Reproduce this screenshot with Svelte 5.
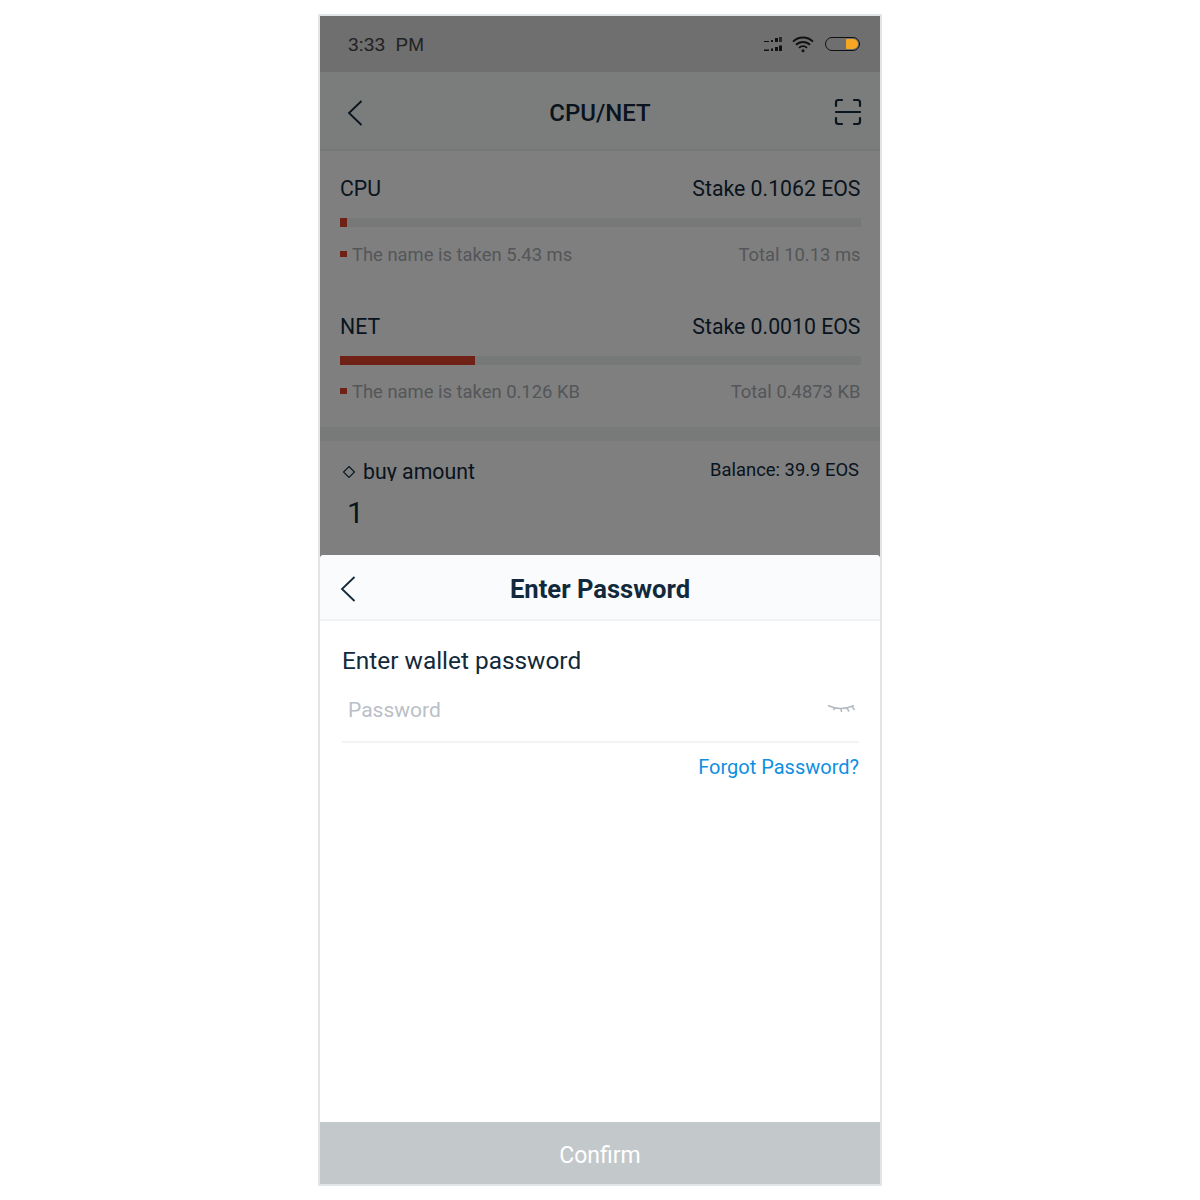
<script>
  const usage = [
    { name: 'CPU', stake: 'Stake 0.1062 EOS', used: 'The name is taken 5.43 ms', total: 'Total 10.13 ms', pct: 1.4 },
    { name: 'NET', stake: 'Stake 0.0010 EOS', used: 'The name is taken 0.126 KB', total: 'Total 0.4873 KB', pct: 26 }
  ];
</script>

<div class="page">
  <div class="phone">
    <div class="status">
      <span class="time">3:33&nbsp; PM</span>
      <div class="status-icons">
        <svg width="20" height="16" viewBox="0 0 20 16" fill="#222">
          <rect x="1" y="5" width="5" height="1" /><rect x="8" y="4" width="2" height="2" /><rect x="12" y="2" width="3" height="4" /><rect x="16" y="1" width="3" height="5" fill="#555" />
          <rect x="1" y="13.500" width="5" height="1.500" /><rect x="8" y="12.500" width="2" height="2.500" /><rect x="12" y="11" width="3" height="4" /><rect x="16" y="9.500" width="3" height="5.500" />
        </svg>
        <svg width="22" height="17" viewBox="0 0 22 17" fill="none" stroke="#222" stroke-width="1.9">
          <path d="M1 5.6a14.2 14.2 0 0 1 20 0" />
          <path d="M4 8.8a10 10 0 0 1 14 0" />
          <path d="M7 11.8a5.6 5.6 0 0 1 8 0" />
          <circle cx="11" cy="14.8" r="1.5" fill="#222" stroke="none" />
        </svg>
        <div class="battery"><span class="level"></span></div>
      </div>
    </div>

    <div class="topbar">
      <svg class="back" width="16" height="26" viewBox="0 0 16 26" fill="none" stroke="#14283a" stroke-width="1.8">
        <path d="M14.5 1 2 13l12.500 12" />
      </svg>
      <h1>CPU/NET</h1>
      <svg class="scan" width="28" height="28" viewBox="0 0 28 28" fill="none" stroke="#14283a" stroke-width="2.200" stroke-linecap="round">
        <path d="M2 8V4.500Q2 2 4.500 2H8M20 2h3.500Q26 2 26 4.500V8" />
        <path d="M2 14h24" />
        <path d="M2 20v3.500Q2 26 4.500 26H8M20 26h3.500Q26 26 26 23.500V20" />
      </svg>
    </div>

    <div class="usage">
      {#each usage as u}
        <section class="resource">
          <div class="row main">
            <span>{u.name}</span>
            <span>{u.stake}</span>
          </div>
          <div class="bar"><div class="fill" style="width: {u.pct}%"></div></div>
          <div class="row sub">
            <span class="used">{u.used}</span>
            <span>{u.total}</span>
          </div>
        </section>
      {/each}
    </div>

    <div class="amount">
      <div class="amount-head">
        <span class="amount-label">
          <svg width="14" height="14" viewBox="0 0 14 14" fill="none" stroke="#14283a" stroke-width="1.1">
            <path d="M7 1.500 12.500 7 7 12.500 1.500 7z" />
          </svg>
          buy amount
        </span>
        <span class="balance">Balance: 39.9 EOS</span>
      </div>
      <div class="amount-value">1</div>
    </div>

    <div class="overlay"></div>

    <div class="sheet">
      <div class="sheet-head">
        <svg class="back" width="16" height="26" viewBox="0 0 16 26" fill="none" stroke="#14283a" stroke-width="1.8">
          <path d="M14.5 1 2 13l12.500 12" />
        </svg>
        <h2>Enter Password</h2>
      </div>
      <div class="sheet-body">
        <label for="pw">Enter wallet password</label>
        <div class="field">
          <input id="pw" type="password" placeholder="Password" />
          <svg width="28" height="12" viewBox="0 0 28 12" fill="none" stroke="#b5bbc1" stroke-width="1.6">
            <path d="M1 1.500c8 4 17 4 26 0" />
            <path d="M8 3.500 6.500 6M14 4.500 14.500 8M20 4 22 7.500M25 2.500 27.500 6" />
          </svg>
        </div>
        <div class="forgot"><span>Forgot Password?</span></div>
      </div>
      <button class="confirm">Confirm</button>
    </div>
  </div>
</div>

<style>
  :global(body) {
    background: #fff;
  }

  .page {
    height: 1200px;
    display: flex;
    justify-content: center;
    align-items: center;
    font-family: Roboto, "Liberation Sans", sans-serif;
    color: #12293c;
  }

  .phone {
    position: relative;
    width: 560px;
    height: 1168px;
    border: 2px solid #e1e5e8;
    background: #fff;
    overflow: hidden;
  }

  .status {
    height: 56px;
    background: #dedede;
    display: flex;
    align-items: center;
    justify-content: space-between;
    padding: 0 20px 0 28px;
  }

  .time {
    font-family: "Liberation Sans", sans-serif;
    font-size: 19px;
    color: #444;
    padding-top: 2px;
  }

  .status-icons {
    display: flex;
    align-items: center;
    gap: 9px;
  }

  .battery {
    width: 35px;
    height: 14px;
    box-sizing: border-box;
    border: 1.5px solid #222;
    border-radius: 8px;
    display: flex;
    justify-content: flex-end;
    padding: 1px;
    margin-left: 2px;
  }

  /* stays bright above the dimming layer, as in the real status bar */
  .level {
    position: relative;
    z-index: 1;
    width: 12px;
    background: #f5a623;
    border-radius: 1px 6px 6px 1px;
  }

  .topbar {
    position: relative;
    height: 79px;
    box-sizing: border-box;
    background: #f6fafa;
    border-bottom: 2px solid #eceef0;
    display: flex;
    align-items: center;
    justify-content: center;
  }

  .topbar .back {
    position: absolute;
    left: 27px;
    top: 28px;
  }

  .topbar .scan {
    position: absolute;
    right: 18px;
    top: 26px;
  }

  h1 {
    margin: 0;
    padding-top: 4px;
    font-size: 24px;
    font-weight: 500;
  }

  .usage {
    border-bottom: 14px solid #f0f2f2;
    padding: 24px 19.500px 0 20px;
    height: 290px;
    box-sizing: border-box;
    display: flex;
    flex-direction: column;
    gap: 46px;
  }

  .row {
    display: flex;
    justify-content: space-between;
  }

  .main {
    font-size: 21.25px;
    line-height: 28px;
  }

  .bar {
    height: 9px;
    margin: 15px 0 15.5px;
    background: #eef0f0;
  }

  .fill {
    height: 100%;
    background: #e0432b;
  }

  .sub {
    font-size: 18.4px;
    line-height: 24px;
    color: #a8adb2;
  }

  .used {
    position: relative;
    padding-left: 12px;
  }

  .used::before {
    content: '';
    position: absolute;
    left: 0;
    top: 8px;
    width: 7px;
    height: 6px;
    background: #e0432b;
  }

  .amount {
    padding: 17px 21px 0 22px;
  }

  .amount-head {
    display: flex;
    justify-content: space-between;
    align-items: flex-start;
  }

  .amount-label {
    display: flex;
    align-items: center;
    gap: 7px;
    font-size: 21.3px;
    line-height: 28px;
    height: 18px;
    padding-top: 5px;
    margin-bottom: 2px;
    overflow: hidden;
  }

  .balance {
    font-size: 18.4px;
    line-height: 24px;
  }

  .amount-value {
    font-size: 30px;
    line-height: 40px;
    margin: 10px 0 0 5px;
  }

  .overlay {
    position: absolute;
    inset: 0;
    background: rgba(0, 0, 0, 0.5);
  }

  .sheet {
    position: absolute;
    left: 0;
    right: 0;
    bottom: 0;
    height: 629px;
    background: #fff;
    border-radius: 4px 4px 0 0;
    display: flex;
    flex-direction: column;
  }

  .sheet-head {
    position: relative;
    height: 66px;
    flex-shrink: 0;
    box-sizing: border-box;
    background: #f9fbfd;
    border-bottom: 2px solid #eff1f3;
    display: flex;
    align-items: center;
    justify-content: center;
    border-radius: 4px 4px 0 0;
  }

  .sheet-head .back {
    position: absolute;
    left: 20px;
    top: 21px;
  }

  h2 {
    margin: 0;
    padding-top: 4px;
    font-size: 25.6px;
    font-weight: 700;
  }

  .sheet-body {
    flex: 1;
    padding: 24px 21px 0 22px;
    display: flex;
    flex-direction: column;
  }

  label {
    font-size: 24.4px;
    line-height: 32px;
  }

  .field {
    margin-top: 11px;
    border-bottom: 2px solid #f1f3f4;
    display: flex;
    align-items: center;
    justify-content: space-between;
    padding: 0 4px 9px 6px;
    height: 44px;
  }

  input {
    flex: 1;
    border: none;
    outline: none;
    padding: 0;
    background: none;
    font: inherit;
    font-size: 21px;
    color: #12293c;
  }

  input::placeholder {
    color: #b9c0c7;
  }

  .forgot {
    margin-top: 11px;
    text-align: right;
    font-size: 20px;
    line-height: 26px;
    color: #0f8fe2;
  }

  .confirm {
    height: 62px;
    flex-shrink: 0;
    border: none;
    padding: 4px 0 0;
    background: #c3c8cb;
    color: #fff;
    font: inherit;
    font-size: 23px;
  }
</style>
